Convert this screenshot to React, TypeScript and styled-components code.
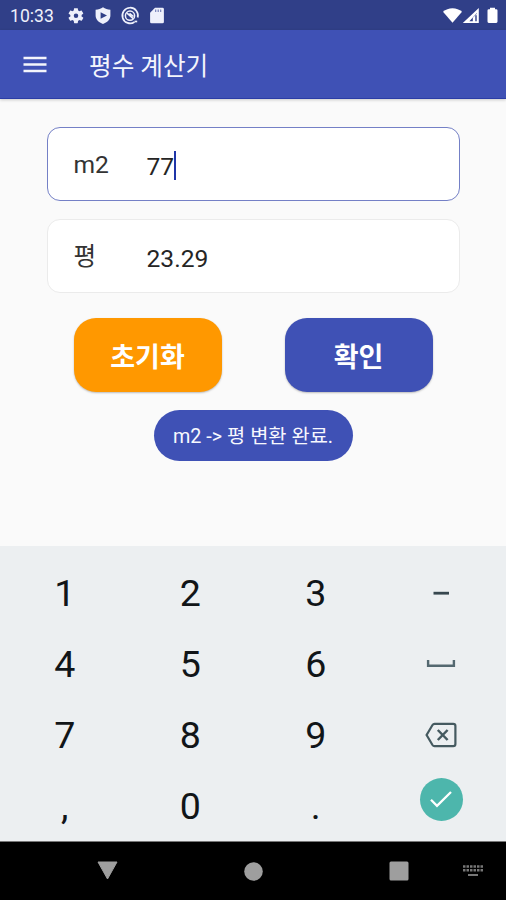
import React from "react";
import styled, { createGlobalStyle } from "styled-components";

const GlobalStyle = createGlobalStyle`
  * { box-sizing: border-box; }
  body { margin: 0; background: #fafafa; font-family: Roboto, "Noto Sans CJK KR", sans-serif; }
  button { border: 0; padding: 0; margin: 0; font-family: inherit; }
`;

const Screen = styled.div`
  width: 506px;
  height: 900px;
  display: flex;
  flex-direction: column;
  overflow: hidden;
  background: #fafafa;
`;

const StatusBar = styled.header`
  flex: none;
  height: 30px;
  display: flex;
  align-items: center;
  padding: 2px 8px 0 10px;
  background: #303f88;
  color: #eef0fb;
`;

const Clock = styled.span`
  width: 56px;
  font-size: 17.6px;
  line-height: 28px;
`;

const StatusIcons = styled.div<{ $end?: boolean }>`
  display: flex;
  align-items: center;
  height: 20px;
  gap: ${(p) => (p.$end ? 0 : "7px")};
  margin-left: ${(p) => (p.$end ? "auto" : 0)};
  svg { display: block; }
`;

const AppBar = styled.nav`
  flex: none;
  height: 69px;
  display: flex;
  align-items: center;
  padding: 3px 23px 0;
  background: #3f51b5;
  border-bottom: 1px solid #2b3da6;
  box-shadow: 0 1px 3px rgba(0, 0, 0, 0.2);
`;

const MenuButton = styled.button`
  width: 66px;
  height: 24px;
  margin-bottom: 2px;
  background: none;
  svg { display: block; }
`;

const Title = styled.h1`
  margin: 0;
  padding-top: 2px;
  font-size: 24.6px;
  font-weight: 400;
  line-height: 36px;
  color: #f4f5fc;
`;

const Content = styled.main`
  flex: none;
  height: 447px;
  display: flex;
  flex-direction: column;
  align-items: center;
  padding-top: 28px;
`;

const Field = styled.div<{ $focused?: boolean }>`
  width: 413px;
  height: 74px;
  flex: none;
  display: flex;
  align-items: center;
  margin-bottom: 18px;
  padding-left: 26px;
  background: #fff;
  border: 1.5px solid ${(p) => (p.$focused ? "#7480c6" : "#ebebeb")};
  border-radius: 13px;
  color: #252525;
  font-size: 24.6px;
  line-height: 32px;
`;

const FieldLabel = styled.label`
  width: 73px;
  padding-top: 2px;
  color: #333;
`;

const FieldValue = styled.div`
  display: flex;
  align-items: center;
  padding-top: 5px;
`;

const Caret = styled.i`
  width: 2px;
  height: 29px;
  margin: -2px 0 0;
  background: #1f35a8;
`;

const Actions = styled.div`
  display: flex;
  gap: 63px;
  margin: 7px 0 18px;
`;

const ActionButton = styled.button<{ $tone: string }>`
  width: 148px;
  height: 74px;
  padding-top: 6px;
  border-radius: 22px;
  background: ${(p) => p.$tone};
  box-shadow: 0 1px 2px rgba(0, 0, 0, 0.25);
  color: #fff;
  font-size: 27px;
  font-weight: 700;
  line-height: 38px;
`;

const Toast = styled.div`
  width: 199px;
  height: 51px;
  flex: none;
  display: flex;
  align-items: center;
  justify-content: center;
  padding-top: 3px;
  border-radius: 26px;
  background: #3f51b5;
  color: #f7f8fe;
  font-size: 19.8px;
  line-height: 28px;
  white-space: nowrap;
`;

const Keyboard = styled.section`
  flex: none;
  height: 295px;
  display: grid;
  grid-template-columns: repeat(4, 125.5px);
  grid-template-rows: repeat(4, 71.2px);
  padding: 11px 2px 0;
  background: #eceff1;
`;

const Key = styled.button<{ $icon?: boolean }>`
  display: flex;
  align-items: center;
  justify-content: center;
  background: none;
  color: #111518;
  font-size: 37.6px;
  line-height: 44px;
  svg { display: block; }
`;

const EnterKey = styled.span`
  width: 43px;
  height: 43px;
  display: flex;
  align-items: center;
  justify-content: center;
  margin-bottom: 14px;
  border-radius: 50%;
  background: #4db6ac;
`;

const NavBar = styled.footer`
  flex: none;
  height: 59px;
  display: grid;
  grid-template-columns: 180px 146px 137px 1fr;
  align-items: center;
  background: #000;
  border-top: 1px solid #777;
  svg { display: block; }
`;

const NavItem = styled.div<{ $left: number }>`
  padding-left: ${(p) => p.$left}px;
`;

const SettingsIcon = () => (
  <svg width="20" height="20" viewBox="0 0 24 24" fill="currentColor">
    <path d="M19.4 13c0-.3.1-.6.1-1s0-.7-.1-1l2.1-1.6c.2-.2.2-.4.1-.7l-2-3.4c-.1-.2-.4-.3-.6-.2l-2.5 1a7 7 0 0 0-1.7-1l-.4-2.7c0-.2-.2-.4-.5-.4h-4c-.2 0-.5.2-.5.4L9 5.100a7 7 0 0 0-1.700 1l-2.500-1c-.2-.1-.5 0-.6.2l-2 3.400c-.1.3-.1.5.1.700L4.500 11a8 8 0 0 0 0 2l-2.200 1.600c-.2.2-.2.4-.1.700l2 3.400c.1.2.4.3.6.2l2.500-1c.5.4 1.100.7 1.700 1l.4 2.700c0 .2.300.4.5.4h4c.3 0 .5-.2.5-.4l.4-2.700c.6-.3 1.200-.6 1.700-1l2.500 1c.2.1.5 0 .6-.2l2-3.400c.1-.3.1-.5-.1-.700zM12 15a3 3 0 1 1 0-6 3 3 0 0 1 0 6z" transform="translate(1.200 .8) scale(.9)" />
  </svg>
);

const ShieldIcon = () => (
  <svg width="20" height="20" viewBox="0 0 20 20">
    <path d="M10 1.200c2.200 1.700 4.600 2.300 7.400 2.500v5.800c0 4-3.200 6.900-7.400 8.500-4.200-1.600-7.400-4.500-7.400-8.500V3.700C5.400 3.500 7.800 2.900 10 1.200z" fill="currentColor" />
    <path d="M7.600 6.200 14 9.500l-6.400 3.300z" fill="#303f88" />
  </svg>
);

const ScanIcon = () => (
  <svg width="20" height="20" viewBox="0 0 20 20" fill="none" stroke="currentColor">
    <path d="M17.700 11.500A7.800 7.800 0 1 0 14.500 16" strokeWidth="1.700" />
    <path d="M14.500 15.500h2.700" strokeWidth="1.700" />
    <circle cx="10" cy="9.700" r="4.600" strokeWidth="1.500" />
    <path d="m6.800 6.800 6.400 5.800M9.500 7.300l4 3.200" strokeWidth="1.600" />
  </svg>
);

const SdCardIcon = () => (
  <svg width="20" height="20" viewBox="0 0 20 20">
    <path d="M8 1.800h7.500a1.400 1.400 0 0 1 1.400 1.400v12.700a1.400 1.400 0 0 1-1.400 1.400h-11a1.400 1.400 0 0 1-1.400-1.400V6.800z" fill="currentColor" />
    <path d="M8.700 3.500v2.500M11.200 3.500v2.500M13.700 3.500v2.500" stroke="#6d78b4" strokeWidth="1.100" />
  </svg>
);

const SignalIcons = () => (
  <svg width="58" height="20" viewBox="0 0 58 20" fill="#fff">
    <path d="M3 5.800C8 .9 17 .9 22 5.800l-9.500 11z" />
    <path d="M38.800 2v15H22.800zM36.800 7l-7.400 8.300h3.400v-3.500l4-4z" fillRule="evenodd" />
    <path d="M36 9.300v6" stroke="#303f88" strokeWidth="1.400" />
    <path d="M50 1.700h5v1.600h1.200a1.300 1.300 0 0 1 1.300 1.300v11a1.300 1.300 0 0 1-1.300 1.300h-7.400a1.300 1.300 0 0 1-1.300-1.300v-11a1.300 1.300 0 0 1 1.300-1.300H50z" />
  </svg>
);

const MenuIcon = () => (
  <svg width="24" height="24" viewBox="0 0 24 24" fill="#f4f5fc">
    <path d="M.5 3.700h23v2.600H.5zM.5 10.200h23v2.600H.5zM.5 16.700h23v2.600H.5z" />
  </svg>
);

const MinusIcon = () => (
  <svg width="32" height="24" viewBox="0 0 32 24"><path d="M8.500 12.200h15.500" stroke="#37474f" strokeWidth="2.800" /></svg>
);

const SpaceIcon = () => (
  <svg width="32" height="24" viewBox="0 0 32 24"><path d="M3.100 8v5.800h25.800V8" fill="none" stroke="#546870" strokeWidth="2.400" /></svg>
);

const BackspaceIcon = () => (
  <svg width="32" height="26" viewBox="0 0 32 26" fill="none" stroke="#455a60" strokeWidth="2.200">
    <path d="M9.500 1.800h18.700a2.200 2.200 0 0 1 2.200 2.200v18a2.200 2.200 0 0 1-2.200 2.200H9.500c-1 0-1.500-.4-2-1.200L1.600 13l5.900-10c.5-.8 1-1.200 2-1.200z" />
    <path d="m12.800 8 9.800 10M22.600 8l-9.800 10" strokeWidth="2.500" />
  </svg>
);

const CheckIcon = () => (
  <svg width="24" height="20" viewBox="0 0 24 20" fill="none" stroke="#fff" strokeWidth="2.300">
    <path d="m2 10.800 6 6L22 3" />
  </svg>
);

const KeyboardIcon = () => (
  <svg width="20" height="14" viewBox="0 0 20 14" stroke="#777">
    <path d="M0 2.500h20M0 6.200h20" strokeWidth="2.500" strokeDasharray="2.500 1" />
    <path d="M5 11h10" strokeWidth="2" />
  </svg>
);

const keys: { id: string; face: React.ReactNode; icon?: boolean }[] = [
  { id: "1", face: "1" },
  { id: "2", face: "2" },
  { id: "3", face: "3" },
  { id: "minus", face: <MinusIcon />, icon: true },
  { id: "4", face: "4" },
  { id: "5", face: "5" },
  { id: "6", face: "6" },
  { id: "space", face: <SpaceIcon />, icon: true },
  { id: "7", face: "7" },
  { id: "8", face: "8" },
  { id: "9", face: "9" },
  { id: "delete", face: <BackspaceIcon />, icon: true },
  { id: "comma", face: "," },
  { id: "0", face: "0" },
  { id: "period", face: "." },
  { id: "enter", face: <EnterKey><CheckIcon /></EnterKey>, icon: true },
];

export default function App() {
  return (
    <Screen lang="ko">
      <GlobalStyle />
      <StatusBar>
        <Clock>10:33</Clock>
        <StatusIcons>
          <SettingsIcon />
          <ShieldIcon />
          <ScanIcon />
          <SdCardIcon />
        </StatusIcons>
        <StatusIcons $end>
          <SignalIcons />
        </StatusIcons>
      </StatusBar>
      <AppBar>
        <MenuButton aria-label="메뉴"><MenuIcon /></MenuButton>
        <Title>평수 계산기</Title>
      </AppBar>
      <Content>
        <Field $focused>
          <FieldLabel>m2</FieldLabel>
          <FieldValue>77<Caret /></FieldValue>
        </Field>
        <Field>
          <FieldLabel>평</FieldLabel>
          <FieldValue>23.29</FieldValue>
        </Field>
        <Actions>
          <ActionButton $tone="#ff9800">초기화</ActionButton>
          <ActionButton $tone="#3f51b5">확인</ActionButton>
        </Actions>
        <Toast>m2 -&gt; 평 변환 완료.</Toast>
      </Content>
      <Keyboard>
        {keys.map((k) => (
          <Key key={k.id} $icon={k.icon} aria-label={k.id}>{k.face}</Key>
        ))}
      </Keyboard>
      <NavBar>
        <NavItem $left={97}>
          <svg width="21" height="20" viewBox="0 0 21 20"><path d="M1 1h19L10.500 18z" fill="#9e9e9e" stroke="#9e9e9e" strokeLinejoin="round" /></svg>
        </NavItem>
        <NavItem $left={64}>
          <svg width="19" height="19" viewBox="0 0 19 19"><circle cx="9.500" cy="9.500" r="9.300" fill="#9e9e9e" /></svg>
        </NavItem>
        <NavItem $left={63}>
          <svg width="20" height="20" viewBox="0 0 20 20"><rect x=".5" y=".5" width="19" height="19" rx="1.500" fill="#9e9e9e" /></svg>
        </NavItem>
        <NavItem $left={0}>
          <KeyboardIcon />
        </NavItem>
      </NavBar>
    </Screen>
  );
}
